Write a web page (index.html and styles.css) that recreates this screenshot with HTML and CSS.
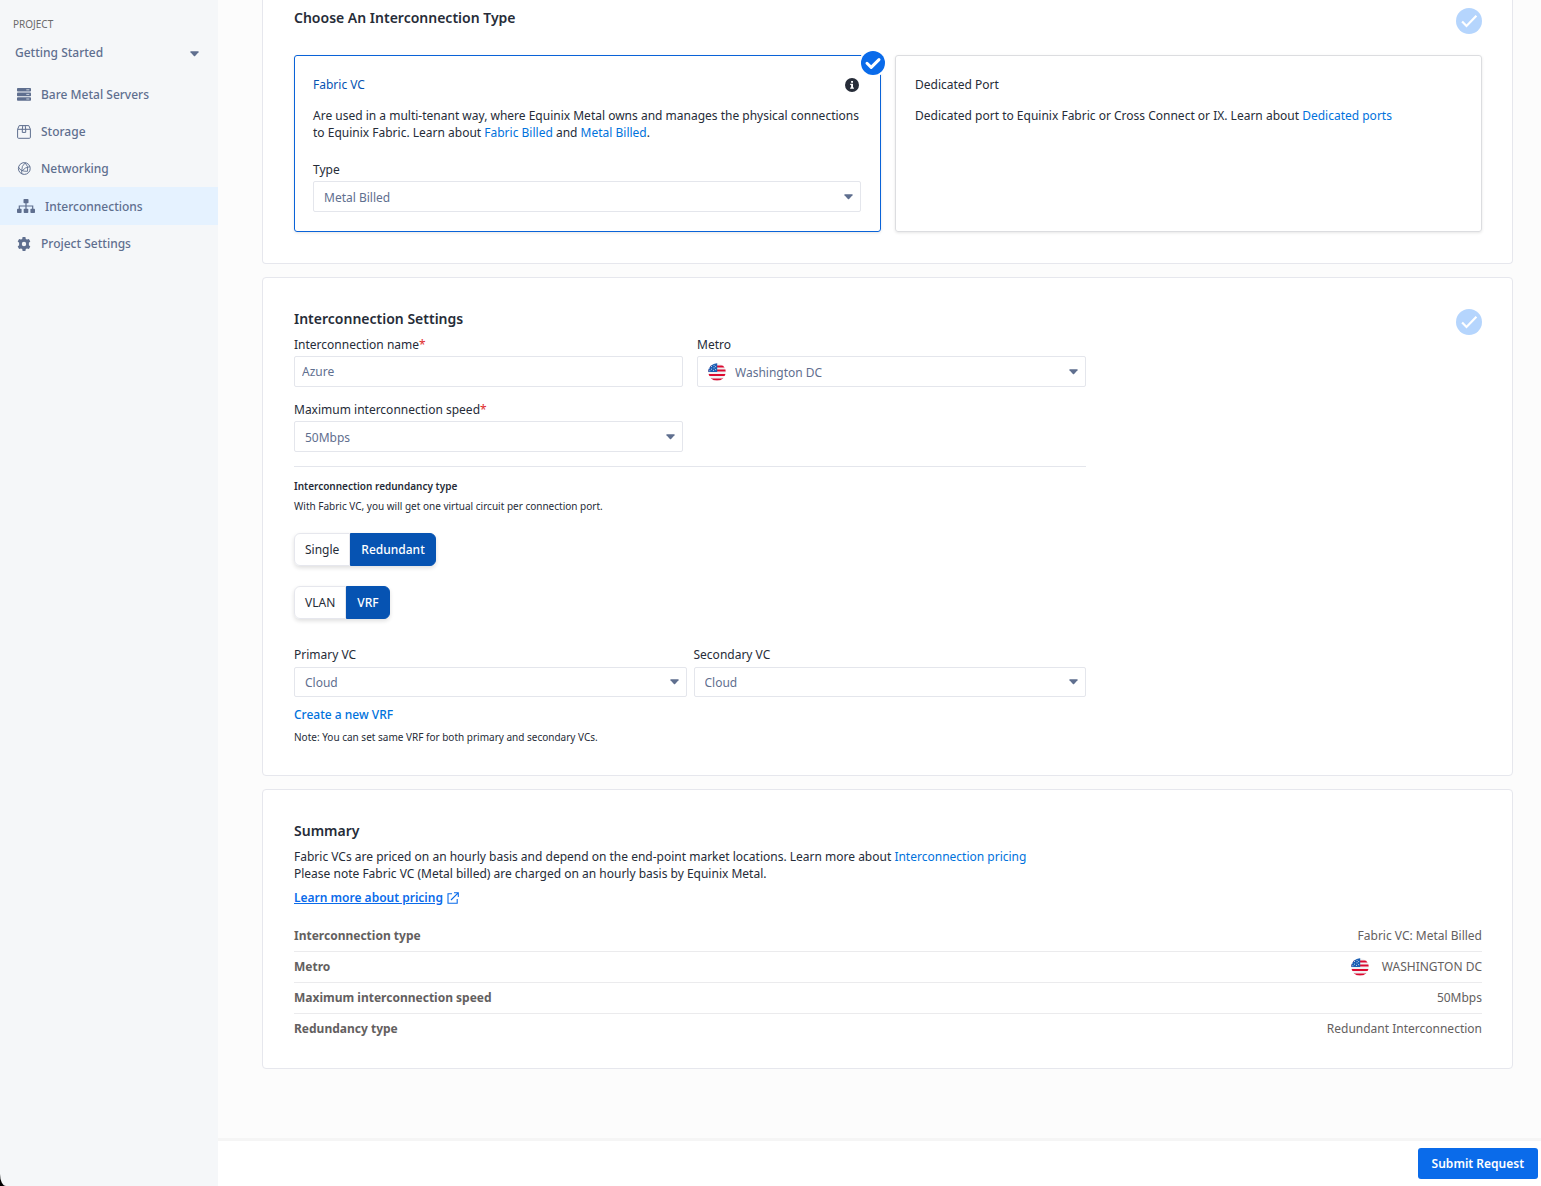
FILE: index.html
```html
<!DOCTYPE html>
<html lang="en">
<head>
<meta charset="utf-8">
<title>Request an interconnection</title>
<meta name="viewport" content="width=device-width, initial-scale=1">
<link rel="stylesheet" href="styles.css">
</head>
<body>
<svg class="sprite" aria-hidden="true">
  <symbol id="flag-us" viewBox="0 0 18 18">
    <clipPath id="round"><circle cx="9" cy="9" r="8.7"/></clipPath>
    <g clip-path="url(#round)">
      <rect width="18" height="18" fill="#f1f1f3"/>
      <path d="M0 3.5h18M0 7.4h18M0 11.9h18M0 16.6h18" stroke="#dc0a30" stroke-width="2"/>
      <path d="M0 0h9.2v9H0z" fill="#1b5fb4"/>
      <path d="M3 3.5h.9M5.6 2.4h.9M5.6 4.8h.9M3 6.2h.9M7.2 3.6h.9M7.2 6.6h.9M1 5h.9M5 7.4h.9M1.4 7.8h.9" stroke="#dfe9f6" stroke-width=".9"/>
    </g>
  </symbol>
  <symbol id="check" viewBox="0 0 26 26">
    <circle cx="13" cy="13" r="13" fill="#b5d5fd"/>
    <path d="M6.1 13.4l4.4 4.5 9.9-10.2" fill="none" stroke="#fff" stroke-width="2.2"/>
  </symbol>
</svg>
<div class="shell">
  <aside class="sidebar">
    <div class="project-label" id="project-label">PROJECT</div>
    <button class="project-picker" type="button" aria-describedby="project-label">
      Getting Started
      <svg width="9" height="6" viewBox="0 0 9 6"><path d="M.8.3h7.4q.8.2.3.9L5.1 5q-.6.6-1.2 0L.5 1.2Q0 .5.8.3z" fill="#5f6f8f"/></svg>
    </button>
    <nav class="nav">
      <a class="nav-item" href="#servers">
        <svg width="14" height="13" viewBox="0 0 14 13"><rect width="14" height="3.6" rx=".8"/><rect y="4.6" width="14" height="3.6" rx=".8"/><rect y="9.2" width="14" height="3.6" rx=".8"/><path d="M9.3 1.8h3M9.3 6.4h3M9.3 11h3" stroke="#d5dbe5" stroke-width=".9"/></svg>
        Bare Metal Servers
      </a>
      <a class="nav-item" href="#storage">
        <svg class="line" width="14" height="14" viewBox="0 0 14 14"><path d="M.6 4.3L2.2.6h9.6l1.6 3.7v8q0 1-1 1H1.6q-1 0-1-1zM.6 4.3h12.8M5.3 4.3V7.4h3.4V4.3M5.3 4.3L5.8.6M8.7 4.3L8.2.6"/></svg>
        Storage
      </a>
      <a class="nav-item" href="#networking">
        <svg class="line" width="14" height="13" viewBox="0 0 14 13"><circle cx="7.3" cy="6.5" r="5.9"/><path d="M8.2.9Q4.5 3.4 4.6 9.4M8.2.9Q11.8 4.4 10.5 9.3M1.6 5.2Q3.2 9.6 10.5 9.3M12.9 4.6Q8 5 4.6 9.4L4.9 11.8" stroke-width=".9"/></svg>
        Networking
      </a>
      <a class="nav-item active" href="#interconnections" aria-current="page">
        <svg width="18" height="14" viewBox="0 0 18 14"><rect x="6.5" width="5" height="4.3" rx=".8"/><rect y="9.8" width="4.6" height="4.2" rx=".8"/><rect x="6.7" y="9.8" width="4.6" height="4.2" rx=".8"/><rect x="13.4" y="9.8" width="4.6" height="4.2" rx=".8"/><path d="M9 4v6M2.3 10V7h13.4v3" fill="none" stroke="#5f6f8f" stroke-width="1.2"/></svg>
        Interconnections
      </a>
      <a class="nav-item" href="#settings">
        <svg width="14" height="14" viewBox="0 0 14 14"><path fill-rule="evenodd" d="M5.6 0h2.8l.4 1.9 1.2.7 1.9-.6 1.4 2.4-1.4 1.3v2.6l1.4 1.3-1.4 2.4-1.9-.6-1.2.7-.4 1.9H5.6l-.4-1.9-1.2-.7-1.9.6L.7 9.6l1.4-1.3V5.7L.7 4.4 2.1 2l1.9.6 1.2-.7zM7 4.8a2.2 2.2 0 100 4.4 2.2 2.2 0 000-4.4z"/></svg>
        Project Settings
      </a>
    </nav>
  </aside>

  <div class="page">
    <main class="content">
      <section class="card card-first">
        <div class="card-head">
          <h2>Choose An Interconnection Type</h2>
          <svg width="26" height="26"><use href="#check"/></svg>
        </div>
        <div class="options">
          <article class="option selected">
            <div class="option-title">
              <h3>Fabric VC</h3>
              <svg width="14" height="14" viewBox="0 0 14 14"><circle cx="7" cy="7" r="7" fill="#262c38"/><path d="M6.1 2.9h1.9v1.8H6.1zM5.2 5.7H8v3.9h.9v1.2H5.2V9.6h.9V6.9h-.9z" fill="#fff"/></svg>
            </div>
            <p>Are used in a multi-tenant way, where Equinix Metal owns and manages the physical connections to Equinix Fabric. Learn about <a href="#fabric">Fabric Billed</a> and <a href="#metal">Metal Billed</a>.</p>
            <div class="field option-field">
              <label for="type">Type</label>
              <select id="type"><option>Metal Billed</option><option>Fabric Billed</option></select>
            </div>
            <svg class="badge" width="28" height="28" viewBox="0 0 28 28"><circle cx="14" cy="14" r="14" fill="#fff"/><circle cx="14" cy="14" r="12" fill="#0a6bea"/><path d="M8 14.3l4.2 4.1 7.8-7.8" fill="none" stroke="#fff" stroke-width="3" stroke-linecap="round" stroke-linejoin="round"/></svg>
          </article>
          <article class="option">
            <div class="option-title"><h3>Dedicated Port</h3></div>
            <p>Dedicated port to Equinix Fabric or Cross Connect or IX. Learn about <a href="#ports">Dedicated ports</a></p>
          </article>
        </div>
      </section>

      <section class="card">
        <div class="card-head">
          <h2>Interconnection Settings</h2>
          <svg width="26" height="26"><use href="#check"/></svg>
        </div>
        <form class="settings">
          <div class="fields">
            <div class="field">
              <label for="name">Interconnection name<span class="required">*</span></label>
              <input id="name" type="text" value="Azure">
            </div>
            <div class="field">
              <label for="metro">Metro</label>
              <div class="with-flag">
                <svg class="flag" width="18" height="18"><use href="#flag-us"/></svg>
                <select id="metro"><option>Washington DC</option></select>
              </div>
            </div>
            <div class="field">
              <label for="speed">Maximum interconnection speed<span class="required">*</span></label>
              <select id="speed"><option>50Mbps</option></select>
            </div>
          </div>
          <hr>
          <h3 class="small-title">Interconnection redundancy type</h3>
          <p class="small">With Fabric VC, you will get one virtual circuit per connection port.</p>
          <div class="toggle first-toggle">
            <button type="button" aria-pressed="false">Single</button><button type="button" aria-pressed="true">Redundant</button>
          </div>
          <div class="toggle">
            <button type="button" aria-pressed="false">VLAN</button><button type="button" aria-pressed="true">VRF</button>
          </div>
          <div class="fields circuits">
            <div class="field">
              <label for="primary">Primary VC</label>
              <select id="primary"><option>Cloud</option></select>
            </div>
            <div class="field">
              <label for="secondary">Secondary VC</label>
              <select id="secondary"><option>Cloud</option></select>
            </div>
          </div>
          <a class="create" href="#new-vrf">Create a new VRF</a>
          <p class="small note">Note: You can set same VRF for both primary and secondary VCs.</p>
        </form>
      </section>

      <section class="card card-summary">
        <div class="card-head">
          <h2>Summary</h2>
        </div>
        <p>Fabric VCs are priced on an hourly basis and depend on the end-point market locations. Learn more about <a href="#pricing">Interconnection pricing</a><br>Please note Fabric VC (Metal billed) are charged on an hourly basis by Equinix Metal.</p>
        <a class="more" href="#more"><span>Learn more about pricing</span>
          <svg width="12" height="12" viewBox="0 0 12 12"><path d="M5 1.8H1v9.4h9.2V7M7 .7h4.3V5M11.2.8L4 8" fill="none" stroke="#0a6bea" stroke-width="1.1"/></svg>
        </a>
        <table class="summary">
          <tr><th scope="row">Interconnection type</th><td>Fabric VC: Metal Billed</td></tr>
          <tr><th scope="row">Metro</th><td><span class="place"><svg width="18" height="18"><use href="#flag-us"/></svg>WASHINGTON DC</span></td></tr>
          <tr><th scope="row">Maximum interconnection speed</th><td>50Mbps</td></tr>
          <tr><th scope="row">Redundancy type</th><td>Redundant Interconnection</td></tr>
        </table>
      </section>
    </main>
    <footer class="footer">
      <button class="submit" type="button">Submit Request</button>
    </footer>
  </div>
</div>
</body>
</html>
```
FILE: styles.css
```css
*, *::before, *::after { box-sizing: border-box; }

body {
  margin: 0;
  font: 12px/17px "Noto Sans", "Open Sans", sans-serif;
  color: #262c38;
}

h2, h3, p { margin: 0; }
h2 { font-size: 14px; line-height: 20px; font-weight: 600; }
h3 { font-size: 12px; line-height: 17px; font-weight: 400; }
a { color: #0072dc; text-decoration: none; }
button, input, select { font: inherit; margin: 0; }
svg { display: block; flex: none; }
.sprite { position: absolute; width: 0; height: 0; }

.shell { display: flex; min-height: 100vh; background: #000; }

/* Sidebar */
.sidebar {
  width: 218px;
  flex: none;
  padding-top: 17px;
  background: #f5f7f9;
  border-bottom-left-radius: 6px 12px;
}
.project-label { padding-left: 13px; font-size: 10px; line-height: 14px; color: #6b6b6b; }
.project-picker {
  display: flex;
  align-items: center;
  justify-content: space-between;
  width: 100%;
  height: 45px;
  padding: 0 19px 3px 15px;
  border: 0;
  background: none;
  color: #5f6f8f;
  font-weight: 500;
}
.project-picker svg { margin-top: 4px; }
.nav-item {
  display: flex;
  align-items: center;
  gap: 10px;
  height: 37px;
  padding-left: 17px;
  color: #5f6f8f;
  fill: #5f6f8f;
  font-weight: 500;
}
.nav-item .line { fill: none; stroke: #5f6f8f; }
.nav-item.active { height: 38px; background: #e5f2ff; }

/* Page */
.page {
  display: flex;
  flex-direction: column;
  flex: 1;
  min-width: 0;
  background: #fcfcfc;
}
.content {
  display: flex;
  flex-direction: column;
  gap: 13px;
  flex: 1;
  padding: 0 28px 69px 44px;
}
.card {
  padding: 31px 30px 31px 31px;
  background: #fff;
  border: 1px solid #e6e7ed;
  border-radius: 4px;
}
.card-first { padding-top: 8px; border-top: 0; border-radius: 0 0 4px 4px; }
.card-summary { padding-bottom: 24px; }
.card-head { display: flex; justify-content: space-between; min-height: 27px; }

.options { display: grid; grid-template-columns: 1fr 1fr; gap: 14px; margin-top: 20px; }
.option {
  position: relative;
  padding: 20px 19px 19px;
  border: 1px solid #dcdde0;
  border-radius: 3px;
  box-shadow: 0 1px 3px rgba(0, 0, 0, .1);
}
.option.selected { padding-left: 18px; border-color: #0a63d8; }
.option.selected h3 { color: #0653b2; }
.option-title { display: flex; align-items: center; justify-content: space-between; margin-bottom: 14px; padding-right: 2px; }
.option-field { margin-top: 20px; }
.badge { position: absolute; top: -7px; right: -7px; }

/* Form controls */
.field { display: flex; flex-direction: column; gap: 3px; min-width: 0; }
.required { color: #e02b2b; }
input, select {
  width: 100%;
  height: 31px;
  border: 1px solid #e4e6ec;
  border-radius: 2px;
  background: #fff;
  color: #5f6f8f;
}
input { padding: 0 7px 1px; }
select {
  appearance: none;
  padding: 1px 24px 0 10px;
  background: #fff url("data:image/svg+xml,%3Csvg xmlns='http://www.w3.org/2000/svg' width='9' height='6'%3E%3Cpath d='M.8.3h7.4q.8.2.3.9L5.1 5q-.6.6-1.2 0L.5 1.2Q0 .5.8.3z' fill='%235f6f8f'/%3E%3C/svg%3E") no-repeat right 7px center;
}
.with-flag { position: relative; }
.with-flag select { padding-left: 37px; }
.flag { position: absolute; left: 11px; top: 7px; }

.settings { max-width: 792px; }
.fields { display: grid; grid-template-columns: 1fr 1fr; gap: 14px; }
hr { height: 1px; margin: 14px 0 12px; border: 0; background: #e4e6ec; }
.small-title { font-size: 10px; line-height: 14px; font-weight: 600; }
.small { font-size: 10px; line-height: 14px; }
.small-title + .small { margin-top: 6px; }

.toggle { display: flex; width: max-content; border-radius: 6px; box-shadow: 0 2px 4px rgba(0, 0, 0, .13); }
.first-toggle { margin: 20px 0; }
.toggle button {
  height: 33px;
  padding: 0 10px;
  border: 1px solid #e6e7ed;
  border-radius: 6px 0 0 6px;
  background: #fff;
  color: #262c38;
}
.toggle button[aria-pressed="true"] {
  border-color: #0653b2;
  border-radius: 0 6px 6px 0;
  background: #0653b2;
  color: #fff;
  font-weight: 500;
}
.circuits { gap: 7px; margin-top: 27px; }
.circuits .field { gap: 4px; }
.circuits select { height: 30px; }
.create { display: block; width: max-content; margin-top: 9px; font-weight: 500; }
.note { margin-top: 7px; }

/* Summary */
.more { display: flex; align-items: center; gap: 4px; width: max-content; margin-top: 7px; color: #0a6bea; font-weight: 600; }
.more span { text-decoration: underline; }
.summary { width: 100%; margin-top: 14px; border-collapse: collapse; color: #636060; }
.summary th, .summary td { height: 31px; padding: 0; font-weight: 400; text-align: right; }
.summary th { font-weight: 700; text-align: left; }
.summary tr + tr { border-top: 1px solid #ebebed; }
.place { display: inline-flex; align-items: center; gap: 13px; vertical-align: middle; }

.footer {
  display: flex;
  justify-content: flex-end;
  padding: 7px 3px;
  border-top: 3px solid #f5f5f5;
  background: #fff;
}
.submit {
  height: 31px;
  padding: 0 14px;
  border: 0;
  border-radius: 3px;
  background: #0a6bea;
  color: #fff;
  font-weight: 600;
}
```
